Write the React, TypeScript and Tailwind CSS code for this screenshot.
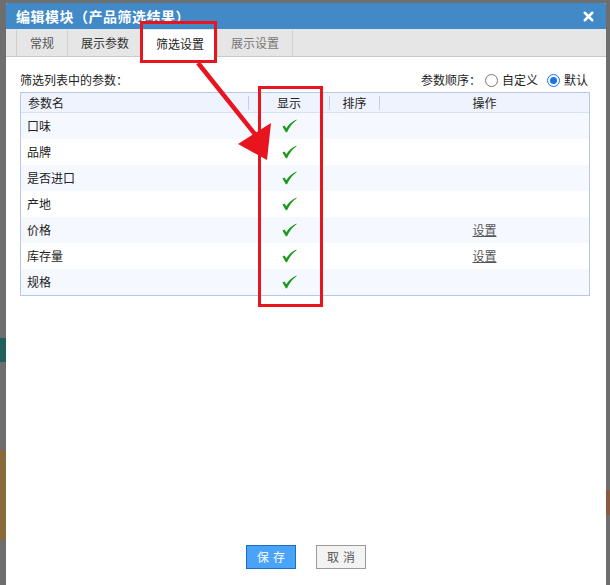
import { X } from "lucide-react";

const rows = [
  { name: "口味", op: false },
  { name: "品牌", op: false },
  { name: "是否进口", op: false },
  { name: "产地", op: false },
  { name: "价格", op: true },
  { name: "库存量", op: true },
  { name: "规格", op: false },
];

const tabs = ["常规", "展示参数", "筛选设置", "展示设置"];

function Check() {
  return (
    <svg width="15" height="14" viewBox="0 0 15 14">
      <path d="M0.5 7.5 L2.5 6.5 L4.3 9.2 C6.8 5.5 9.8 2.6 14.5 0.5 L14.6 1.2 C10.6 4 7.6 7.8 5 13.3 L3.8 13.3 Z" fill="#1c9a1c" />
    </svg>
  );
}

function Radio({ checked }: { checked?: boolean }) {
  return (
    <span
      className={`inline-flex w-[13px] h-[13px] rounded-full border items-center justify-center bg-white ${
        checked ? "border-[#1a73e8]" : "border-[#767676]"
      }`}
    >
      {checked && <span className="w-[7px] h-[7px] rounded-full bg-[#1a73e8]" />}
    </span>
  );
}

export default function App() {
  return (
    <div
      className="relative w-[610px] h-[585px] overflow-hidden bg-[#6e6e6e] text-[12px] text-[#222]"
      style={{ fontFamily: '"Noto Sans CJK SC", "Noto Sans", sans-serif' }}
    >
      {/* blurred page behind the overlay */}
      <div className="absolute left-0 top-[338px] w-[6px] h-[24px] bg-[#1f5f5c]" />
      <div className="absolute left-0 top-[450px] w-[6px] h-[90px] bg-[#8a6a3a]" />
      <div className="absolute right-0 top-[490px] w-[4px] h-[25px] bg-[#8a5a40]" />

      <div className="absolute left-[6px] top-[3px] w-[600px] h-[582px] bg-white flex flex-col rounded-t-[2px]">
        {/* title */}
        <div className="h-[26px] bg-[#4189c7] flex items-center justify-between pl-[10px] pr-[10px] text-white rounded-t-[2px]">
          <span className="text-[14px] font-bold tracking-[0.5px]">编辑模块（产品筛选结果）</span>
          <X className="w-[15px] h-[15px]" strokeWidth={4} />
        </div>

        {/* tabs */}
        <div className="h-[28px] bg-[#e6e6e6] border-b border-[#c9c9c9] flex items-end pl-[10px]">
          {tabs.map((t, i) => (
            <div
              key={t}
              className={`h-[26px] flex items-center justify-center px-[13px] border-r border-[#cfcfcf] ${
                i === 0 ? "border-l" : ""
              } ${
                i === 2
                  ? "bg-white h-[27px] -mb-px text-[#222]"
                  : i === 3
                  ? "text-[#777]"
                  : i === 1
                  ? "text-[#333]"
                  : "text-[#555]"
              }`}
            >
              {t}
            </div>
          ))}
        </div>

        {/* body */}
        <div className="flex-1 flex flex-col px-[14px] pt-[13px]">
          <div className="flex items-center justify-between h-[20px] pr-[4px]">
            <span>筛选列表中的参数：</span>
            <div className="flex items-center gap-[4px]">
              <span>参数顺序：</span>
              <Radio />
              <span className="mr-[5px]">自定义</span>
              <Radio checked />
              <span>默认</span>
            </div>
          </div>

          <div className="mt-[2px] border border-[#b4c8ec] w-[570px]">
            <div className="h-[20px] bg-[#eef3fd] flex items-center border-b border-[#d6e1f5]">
              <div className="w-[228px] pl-[7px] border-r border-[#c0cfea] h-[14px] flex items-center">参数名</div>
              <div className="w-[81px] text-center border-r border-[#c0cfea] h-[14px] flex items-center justify-center">显示</div>
              <div className="w-[50px] text-center border-r border-[#c0cfea] h-[14px] flex items-center justify-center">排序</div>
              <div className="flex-1 text-center">操作</div>
            </div>
            {rows.map((r, i) => (
              <div
                key={r.name}
                className={`h-[26px] flex items-center ${i % 2 === 0 ? "bg-[#f5f8fe]" : "bg-white"}`}
              >
                <div className="w-[228px] pl-[6px]">{r.name}</div>
                <div className="w-[81px] flex justify-center">
                  <Check />
                </div>
                <div className="w-[50px]" />
                <div className="flex-1 text-center">
                  {r.op && <span className="underline text-[#555]">设置</span>}
                </div>
              </div>
            ))}
          </div>

          <div className="flex-1" />

          <div className="flex justify-center gap-[20px] pb-[16px]">
            <button className="w-[50px] h-[24px] bg-[#4aa3f7] border border-[#1a6fc4] text-white tracking-[4px] pl-[4px]">
              保存
            </button>
            <button className="w-[50px] h-[24px] bg-[#f3f3f3] border border-[#9a9a9a] text-[#555] tracking-[4px] pl-[4px]">
              取消
            </button>
          </div>
        </div>
      </div>

      {/* annotations */}
      <div className="absolute left-[140px] top-[21px] w-[77px] h-[42px] border-[3px] border-[#e8141e]" />
      <div className="absolute left-[258px] top-[86px] w-[65px] h-[221px] border-[3px] border-[#e8141e]" />
      <svg className="absolute left-0 top-0" width="610" height="585">
        <line x1="198" y1="63" x2="258" y2="138" stroke="#e8141e" strokeWidth="4.5" />
        <polygon points="267,160 238,144 271,123" fill="#e8141e" />
      </svg>
    </div>
  );
}
